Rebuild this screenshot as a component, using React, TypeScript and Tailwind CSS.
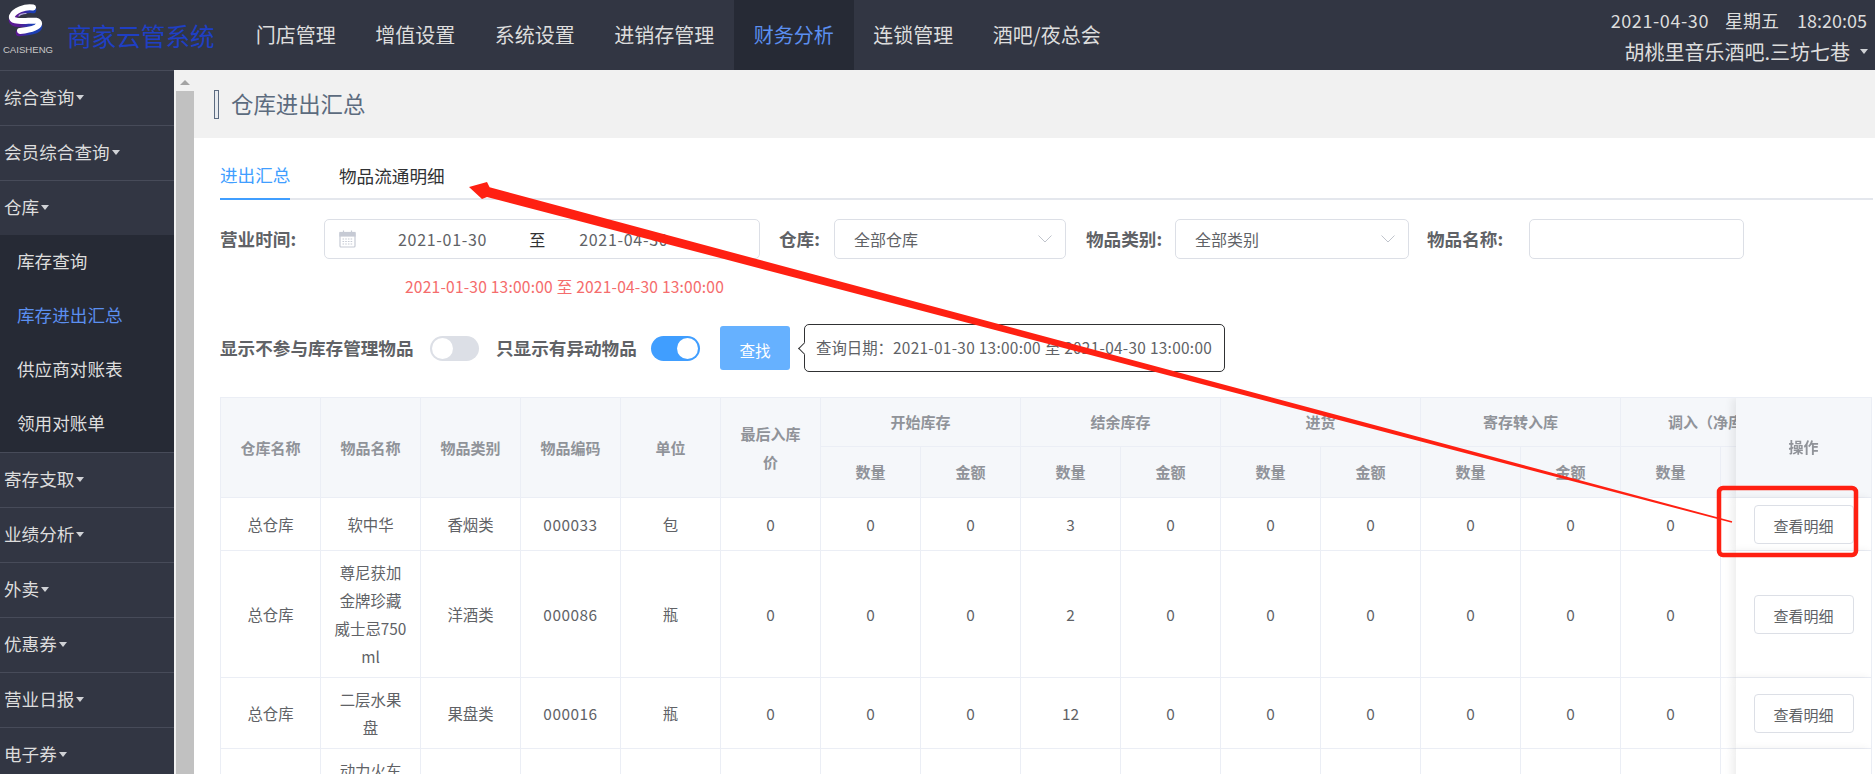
import React from "react";

type SideItem = { label: string; sub?: { label: string; active?: boolean }[] };

const SIDE_ITEMS: SideItem[] = [
  { label: "综合查询" },
  { label: "会员综合查询" },
  {
    label: "仓库",
    sub: [
      { label: "库存查询" },
      { label: "库存进出汇总", active: true },
      { label: "供应商对账表" },
      { label: "领用对账单" },
    ],
  },
  { label: "寄存支取" },
  { label: "业绩分析" },
  { label: "外卖" },
  { label: "优惠券" },
  { label: "营业日报" },
  { label: "电子券" },
];

const NAV_ITEMS = ["门店管理", "增值设置", "系统设置", "进销存管理", "财务分析", "连锁管理", "酒吧/夜总会"];

const GROUPS = ["开始库存", "结余库存", "进货", "寄存转入库", "调入（净库存）"];

const ROWS = [
  { name: "软中华", type: "香烟类", code: "000033", unit: "包", stock: "3" },
  { name: "尊尼获加金牌珍藏威士忌750ml", type: "洋酒类", code: "000086", unit: "瓶", stock: "2" },
  { name: "二层水果盘", type: "果盘类", code: "000016", unit: "瓶", stock: "12" },
  { name: "动力火车纪念版啤酒330ml", type: "啤酒类", code: "000021", unit: "瓶", stock: "1" },
];

const headCell = "border-r border-b border-[#ebeef5] bg-[#f5f7fa] px-[13px] text-center align-middle font-bold text-[15px] leading-[28px] text-[#909399]";
const bodyCell = "border-r border-b border-[#ebeef5] bg-white px-[13px] py-[7px] text-center align-middle text-[15.4px] leading-[28px] text-[#606266] break-all";
const opHead = "sticky right-0 border-r border-b border-[#ebeef5] bg-[#f5f7fa] text-center align-middle font-bold text-[15px] text-[#909399] shadow-[-4px_0_8px_rgba(0,0,0,0.07)]";
const opCell = "sticky right-0 border-r border-b border-[#ebeef5] bg-white pt-[7px] pb-[6px] text-center align-middle shadow-[-4px_0_8px_rgba(0,0,0,0.07)]";

function Caret() {
  return <span className="inline-block w-0 h-0 border-x-[4.5px] border-t-[5px] border-x-transparent border-t-[#d0d2d6]" />;
}

function Logo() {
  return (
    <div className="w-[56px] h-full flex flex-col items-center pt-[4px]">
      <svg className="mr-[6px]" width="36" height="33" viewBox="0 0 36 33">
        <defs>
          <linearGradient id="logo-shade" x1="0" x2="1" y1="0" y2="0">
            <stop offset="0.25" stopColor="#5a1a94" />
            <stop offset="0.75" stopColor="#1c3fb4" />
          </linearGradient>
        </defs>
        <path d="M26 6 C18 5 7 9 5 15 C4 20 11 20 17 20 C23 20 33 18 32 23 C31 27 22 28 12 29" fill="none" stroke="url(#logo-shade)" strokeWidth="6.5" strokeLinecap="round" />
        <path d="M26 3.5 C18 2 7 7 5 12 C4 17 11 17 17 17 C23 17 33 15 32 20 C31 24 22 26 13 27" fill="none" stroke="#ffffff" strokeWidth="6" strokeLinecap="round" />
        <path d="M19 9.5 C15 9.5 12 11 12 12" fill="none" stroke="#b9b3d6" strokeWidth="1.2" strokeLinecap="round" />
      </svg>
      <div className="mt-[7px] font-['Liberation_Sans',sans-serif] text-[9.6px] leading-[12px] text-[#c8c8c8]">CAISHENG</div>
    </div>
  );
}

function TopBar() {
  return (
    <div className="h-[70px] shrink-0 bg-[#323643] flex items-stretch">
      <Logo />
      <div className="ml-[11px] self-center text-[24.6px] leading-none text-[#1f3fc4] whitespace-nowrap">商家云管系统</div>
      <div className="ml-[21.5px] flex">
        {NAV_ITEMS.map((n) => (
          <div
            key={n}
            className={`px-[19.75px] flex items-center text-[20px] whitespace-nowrap ${n === "财务分析" ? "bg-[#262a35] text-[#5b8ff0]" : "text-[#dddddd]"}`}
          >
            {n}
          </div>
        ))}
      </div>
      <div className="ml-auto pr-[7px] flex flex-col items-end text-[#dddddd]">
        <div className="h-[37px] pt-[3px] pr-[1px] flex items-center text-[18px] whitespace-nowrap">
          <span className="tracking-[0.6px]">2021-04-30</span>
          <span className="ml-[16px]">星期五</span>
          <span className="ml-[18px]">18:20:05</span>
        </div>
        <div className="h-[29px] flex items-center text-[20px] whitespace-nowrap">
          胡桃里音乐酒吧.三坊七巷
          <span className="ml-[10px] flex"><Caret /></span>
        </div>
      </div>
    </div>
  );
}

function Sidebar() {
  return (
    <div className="w-[174px] shrink-0 bg-[#323643] overflow-hidden">
      {SIDE_ITEMS.map((item) => (
        <div key={item.label}>
          <div className="h-[55px] border-t border-[#474b59] flex items-center pl-[4px] pb-[2px] text-[17.6px] text-[#dddddd]">
            {item.label}
            <span className="ml-[2px] flex"><Caret /></span>
          </div>
          {item.sub && (
            <div className="bg-[#262a35] h-[217px]">
              {item.sub.map((s) => (
                <div
                  key={s.label}
                  className={`h-[54px] flex items-center pl-[17px] pb-[2px] text-[17.6px] ${s.active ? "text-[#5b8ff0]" : "text-[#dddddd]"}`}
                >
                  {s.label}
                </div>
              ))}
            </div>
          )}
        </div>
      ))}
    </div>
  );
}

function ScrollBar() {
  return (
    <div className="w-[20px] shrink-0 bg-[#f1f1f1] flex flex-col items-center pl-[2px]">
      <div className="h-[21px] flex items-center justify-center pt-[3px]">
        <span className="w-0 h-0 border-x-[5px] border-b-[5px] border-x-transparent border-b-[#a3a3a3]" />
      </div>
      <div className="w-full flex-1 bg-[#c1c1c1]" />
    </div>
  );
}

function CalendarIcon() {
  return (
    <svg width="17" height="18" viewBox="0 0 17 18" fill="none" stroke="#c6cad4" strokeWidth="1.2">
      <rect x="1" y="2.5" width="15" height="14.5" rx="1" />
      <rect x="1" y="2.5" width="15" height="3.5" fill="#c6cad4" />
      <path d="M4.5 0.5v3M12.5 0.5v3" />
      <path d="M3.5 9h10M3.5 11.5h10M3.5 14h10" strokeDasharray="1.6 1.1" />
    </svg>
  );
}

function Chevron() {
  return (
    <svg width="14" height="8" viewBox="0 0 14 8" fill="none" stroke="#c0c4cc" strokeWidth="1">
      <path d="M0.5 0.5L7 7L13.5 0.5" />
    </svg>
  );
}

function Label({ w, ml, children }: { w: string; ml: string; children: React.ReactNode }) {
  return <div className={`${w} ${ml} shrink-0 font-bold text-[17.6px] text-[#606266] whitespace-nowrap`}>{children}</div>;
}

function Select({ w, text }: { w: string; text?: string }) {
  return (
    <div className={`${w} h-[40px] shrink-0 bg-white border border-[#dcdfe6] rounded-[5px] flex items-center pl-[19px] pr-[13px] text-[16px] text-[#606266]`}>
      {text}
      {text && <span className="ml-auto flex"><Chevron /></span>}
    </div>
  );
}

function Filters() {
  return (
    <div className="mt-[19px] flex items-center">
      <Label w="w-[104px]" ml="ml-0">营业时间:</Label>
      <div className="w-[436px] h-[40px] shrink-0 border border-[#dcdfe6] rounded-[5px] flex items-center pl-[14px] text-[16px] text-[#606266] whitespace-nowrap">
        <CalendarIcon />
        <span className="ml-[42px] tracking-[0.7px]">2021-01-30</span>
        <span className="ml-[42px] text-[#303133]">至</span>
        <span className="ml-[34px] tracking-[0.7px]">2021-04-30</span>
      </div>
      <Label w="w-[55px]" ml="ml-[19px]">仓库:</Label>
      <Select w="w-[232px]" text="全部仓库" />
      <Label w="w-[89px]" ml="ml-[20px]">物品类别:</Label>
      <Select w="w-[234px]" text="全部类别" />
      <Label w="w-[102px]" ml="ml-[18px]">物品名称:</Label>
      <Select w="w-[215px]" />
    </div>
  );
}

function Toggle({ on }: { on?: boolean }) {
  return (
    <div className={`w-[49px] h-[25px] shrink-0 rounded-full p-[2px] flex ${on ? "bg-[#409eff] justify-end" : "bg-[#dcdfe6]"}`}>
      <div className="w-[21px] h-[21px] rounded-full bg-white" />
    </div>
  );
}

function Toolbar() {
  return (
    <div className="mt-[27px] h-[48px] flex items-center">
      <Label w="w-[194px]" ml="ml-0">显示不参与库存管理物品</Label>
      <div className="ml-[16px]"><Toggle /></div>
      <Label w="w-[140px]" ml="ml-[17px]">只显示有异动物品</Label>
      <div className="ml-[15px]"><Toggle on /></div>
      <button type="button" className="ml-[20px] w-[70px] h-[44px] shrink-0 rounded-[3px] bg-[#66b1ff] text-white text-[15.6px] pt-[5px]">
        查找
      </button>
      <div className="relative ml-[14px] w-[421px] h-[48px] shrink-0 bg-white border border-[#303133] rounded-[5px] flex items-center pl-[11px] text-[15.4px] text-[#606266] whitespace-nowrap">
        <span className="absolute left-[-5px] top-[19px] w-[9px] h-[9px] rotate-45 bg-white border-l border-b border-[#303133]" />
        查询日期：<span className="tracking-[0.3px]">2021-01-30 13:00:00 至 2021-04-30 13:00:00</span>
      </div>
    </div>
  );
}

function StockTable() {
  return (
    <div className="mt-[25px] w-[1652px] overflow-hidden border-t border-l border-[#ebeef5]">
      <table className="table-fixed border-separate border-spacing-0 w-[1736px]">
        <colgroup>
          {Array.from({ length: 16 }).map((_, i) => (
            <col key={i} className="w-[100px]" />
          ))}
          <col className="w-[136px]" />
        </colgroup>
        <thead>
          <tr className="h-[49px]">
            {["仓库名称", "物品名称", "物品类别", "物品编码", "单位", "最后入库价"].map((h) => (
              <th key={h} rowSpan={2} className={headCell}>{h}</th>
            ))}
            {GROUPS.map((g) => (
              <th key={g} colSpan={2} className={`${headCell} whitespace-nowrap`}>{g}</th>
            ))}
            <th rowSpan={2} className={opHead}>操作</th>
          </tr>
          <tr className="h-[51px]">
            {GROUPS.map((g, gi) => (
              <React.Fragment key={g}>
                <th className={headCell}>数量</th>
                {/* 最后一列被固定列盖住 */}
                <th className={headCell}>{gi === GROUPS.length - 1 ? "" : "金额"}</th>
              </React.Fragment>
            ))}
          </tr>
        </thead>
        <tbody>
          {ROWS.map((r) => (
            <tr key={r.code}>
              <td className={bodyCell}>总仓库</td>
              <td className={bodyCell}>{r.name}</td>
              <td className={bodyCell}>{r.type}</td>
              <td className={`${bodyCell} tracking-[0.5px]`}>{r.code}</td>
              <td className={bodyCell}>{r.unit}</td>
              <td className={bodyCell}>0</td>
              <td className={bodyCell}>0</td>
              <td className={bodyCell}>0</td>
              <td className={bodyCell}>{r.stock}</td>
              {Array.from({ length: 7 }).map((_, i) => (
                <td key={i} className={bodyCell}>{i === 6 ? "" : "0"}</td>
              ))}
              <td className={opCell}>
                <button type="button" className="w-[100px] h-[39px] bg-white border border-[#dcdfe6] rounded-[4px] text-[15px] text-[#606266] pt-[4px]">
                  查看明细
                </button>
              </td>
            </tr>
          ))}
        </tbody>
      </table>
    </div>
  );
}

function Annotations() {
  return (
    <svg className="absolute inset-0 pointer-events-none" width="1875" height="774" viewBox="0 0 1875 774">
      <polygon points="469,187 487,182 489.6,187.3 1732.2,521.2 1731.8,522.8 487,196.9 482,199" fill="#ff2012" />
      <rect x="1719" y="488" width="137" height="67" rx="4" fill="none" stroke="#ff2012" strokeWidth="4.5" />
    </svg>
  );
}

export default function App() {
  return (
    <div className="relative w-[1875px] h-[774px] overflow-hidden bg-white flex flex-col font-['Noto_Sans_CJK_SC','Noto_Sans',sans-serif]">
      <TopBar />
      <div className="flex-1 min-h-0 flex">
        <Sidebar />
        <ScrollBar />
        <div className="flex-1 min-w-0">
          <div className="h-[68px] bg-[#f1f1f1] flex items-center pl-[20px]">
            <span className="w-[5px] h-[29px] border-[1.5px] border-[#5c6b80] bg-[#e8ebef]" />
            <span className="ml-[12px] text-[22.4px] text-[#5c6b7e]">仓库进出汇总</span>
          </div>
          <div className="pl-[26px] pr-[2px]">
            <div className="h-[62px] border-b-2 border-[#e4e7ed] flex text-[17.6px] whitespace-nowrap">
              <div className="w-[70px] h-[62px] border-b-2 border-[#409eff] flex items-center pt-[14px] text-[#409eff]">进出汇总</div>
              <div className="ml-[49px] h-[62px] flex items-center pt-[14px] text-[#303133]">物品流通明细</div>
            </div>
            <Filters />
            <div className="mt-[16px] h-[22px] pl-[185px] text-[15.6px] leading-[22px] tracking-[0.2px] text-[#f56c6c] whitespace-nowrap">
              2021-01-30 13:00:00 至 2021-04-30 13:00:00
            </div>
            <Toolbar />
            <StockTable />
          </div>
        </div>
      </div>
      <Annotations />
    </div>
  );
}
